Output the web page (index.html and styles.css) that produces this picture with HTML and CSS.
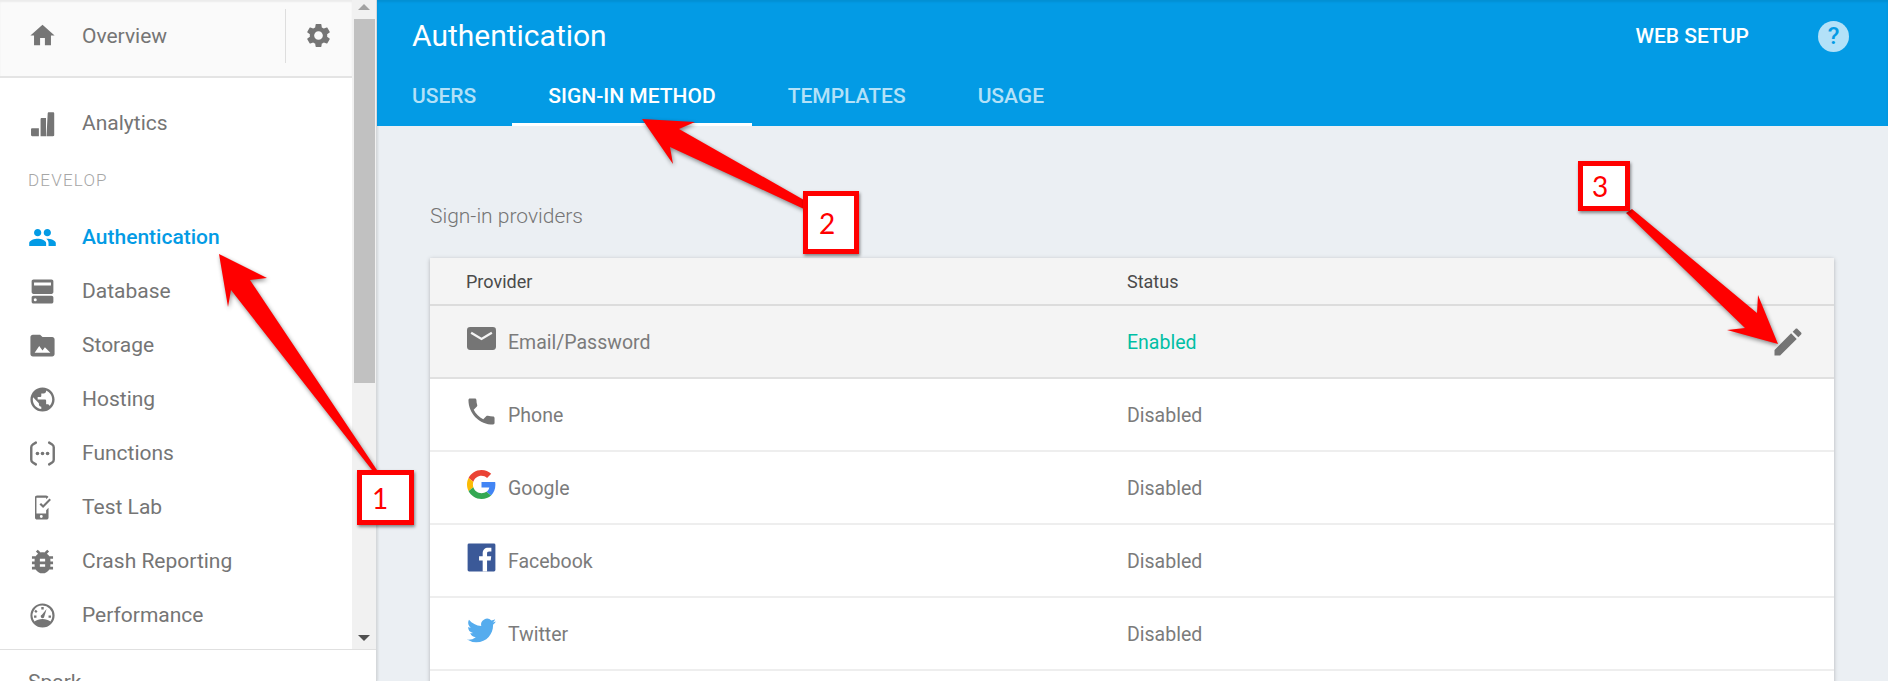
FILE: index.html
```html
<!DOCTYPE html>
<html lang="en">
<head>
    <meta charset="UTF-8">
    <title>Authentication</title>
    <link rel="stylesheet" href="styles.css">
</head>
<body>
<div class="page">
    <aside class="sidebar">
        <div class="sidebar-top">
            <div class="sidebar-scroll">
                <div class="overview">
                    <a class="nav-item overview-link">
                        <svg class="nav-icon" viewBox="0 0 24 24"><path d="M10 20v-6h4v6h5v-8h3L12 3 2 12h3v8z"/></svg>
                        Overview
                    </a>
                    <span class="overview-gear">
                        <svg viewBox="0 0 24 24"><path d="M19.14 12.94c.04-.3.06-.61.06-.94 0-.32-.02-.64-.07-.94l2.03-1.58c.18-.14.23-.41.12-.61l-1.92-3.32c-.12-.22-.37-.29-.59-.22l-2.39.96c-.5-.38-1.03-.7-1.62-.94l-.36-2.54c-.04-.24-.24-.41-.48-.41h-3.84c-.24 0-.43.17-.47.41l-.36 2.54c-.59.24-1.13.57-1.62.94l-2.39-.96c-.22-.08-.47 0-.59.22L2.74 8.87c-.12.21-.08.47.12.61l2.03 1.58c-.05.3-.09.63-.09.94s.02.64.07.94l-2.03 1.58c-.18.14-.23.41-.12.61l1.92 3.32c.12.22.37.29.59.22l2.39-.96c.5.38 1.03.7 1.62.94l.36 2.54c.05.24.24.41.48.41h3.84c.24 0 .44-.17.47-.41l.36-2.54c.59-.24 1.13-.56 1.62-.94l2.39.96c.22.08.47 0 .59-.22l1.92-3.32c.12-.22.07-.47-.12-.61l-2.01-1.58zM12 15.6c-1.98 0-3.6-1.62-3.6-3.6s1.62-3.6 3.6-3.6 3.6 1.62 3.6 3.6-1.62 3.6-3.6 3.6z"/></svg>
                    </span>
                </div>
                <nav class="nav">
                    <a class="nav-item">
                        <svg class="nav-icon" viewBox="0 0 24 24"><path d="M2.500 17c0-.6.4-1 1-1H9v6.500H3.500c-.6 0-1-.4-1-1zM10.400 8.500c0-.6.4-1 1-1h3.500v15h-4.500zM16.300 3.700c0-.6.4-1 1-1h3.400c.6 0 1 .4 1 1v17.800c0 .6-.4 1-1 1h-5.400z"/></svg>
                        Analytics
                    </a>
                    <div class="nav-heading">DEVELOP</div>
                    <a class="nav-item active">
                        <svg class="nav-icon" viewBox="0 0 24 24"><path d="M16 11c1.660 0 2.990-1.340 2.990-3S17.660 5 16 5c-1.660 0-3 1.340-3 3s1.340 3 3 3zm-8 0c1.660 0 2.990-1.340 2.990-3S9.660 5 8 5C6.340 5 5 6.340 5 8s1.340 3 3 3zm0 2c-2.330 0-7 1.170-7 3.500V19h14v-2.500c0-2.330-4.670-3.500-7-3.500zm8 0c-.29 0-.62.02-.97.05 1.160.84 1.970 1.970 1.970 3.450V19h6v-2.500c0-2.330-4.670-3.500-7-3.500z"/></svg>
                        Authentication
                    </a>
                    <a class="nav-item">
                        <svg class="nav-icon" viewBox="0 0 24 24"><path fill-rule="evenodd" d="M4.500 2h15c.8 0 1.500.7 1.500 1.500v9c0 .8-.7 1.500-1.500 1.500h-15c-.8 0-1.500-.7-1.500-1.500v-9C3 2.700 3.700 2 4.500 2zM5 4.500V7h14V4.500zM4.500 15.500h15c.8 0 1.500.7 1.500 1.500v3.500c0 .8-.7 1.500-1.500 1.500h-15c-.8 0-1.500-.7-1.500-1.500V17c0-.8.7-1.500 1.500-1.500zM6 17.500a1.200 1.200 0 1 0 0 2.500 1.200 1.200 0 0 0 0-2.500z"/></svg>
                        Database
                    </a>
                    <a class="nav-item">
                        <svg class="nav-icon" viewBox="0 0 24 24"><path fill-rule="evenodd" d="M10 3H4C2.900 3 2 3.900 2 5v14c0 1.100.9 2 2 2h16c1.100 0 2-.9 2-2V7c0-1.100-.9-2-2-2h-8zM5.500 18l3.800-5.500 2.700 3.600 2-2.600 4.500 4.500z"/></svg>
                        Storage
                    </a>
                    <a class="nav-item">
                        <svg class="nav-icon" viewBox="0 0 24 24"><path d="M12 2C6.480 2 2 6.480 2 12s4.480 10 10 10 10-4.480 10-10S17.520 2 12 2zm-1 17.930c-3.950-.49-7-3.850-7-7.930 0-.62.08-1.210.21-1.790L9 15v1c0 1.100.9 2 2 2v1.930zm6.900-2.540c-.26-.81-1-1.390-1.900-1.390h-1v-3c0-.55-.45-1-1-1H8v-2h2c.55 0 1-.45 1-1V7h2c1.100 0 2-.9 2-2v-.41c2.930 1.190 5 4.060 5 7.410 0 2.080-.8 3.970-2.100 5.390z"/></svg>
                        Hosting
                    </a>
                    <a class="nav-item">
                        <svg class="nav-icon" viewBox="0 0 24 24"><path fill="none" stroke="#757575" stroke-width="2" stroke-linecap="round" stroke-linejoin="round" d="M6.500 3 4 4.500c-.8.5-1.300 1.300-1.300 2.300v10.400c0 1 .5 1.800 1.300 2.300L6.500 21M17.500 3 20 4.500c.8.500 1.300 1.300 1.300 2.300v10.400c0 1-.5 1.800-1.300 2.300L17.500 21"/><circle cx="7.800" cy="12" r="1.500"/><circle cx="12" cy="12" r="1.500"/><circle cx="16.200" cy="12" r="1.500"/></svg>
                        Functions
                    </a>
                    <a class="nav-item">
                        <svg class="nav-icon" viewBox="0 0 24 24"><path d="M7.500 2H15c.9 0 1.700.6 1.900 1.400L15 5.200V4H7v13h8v-2.800l2-2V20.500c0 1-.8 1.500-1.700 1.500H7.500c-1 0-1.700-.6-1.700-1.500V3.500C5.800 2.600 6.500 2 7.500 2zm3.500 16.300a1.200 1.200 0 1 0 0 2.400 1.200 1.200 0 0 0 0-2.400z"/><path d="m9.500 9.500 1.300-1.300 1.700 1.700 5.300-5.400 1.200 1.300-6.500 6.600z"/></svg>
                        Test Lab
                    </a>
                    <a class="nav-item">
                        <svg class="nav-icon" viewBox="1 1 22 22"><path d="M20 8h-2.810c-.45-.78-1.070-1.450-1.820-1.960L17 4.410 15.590 3l-2.170 2.170C12.960 5.060 12.490 5 12 5c-.49 0-.96.06-1.410.17L8.410 3 7 4.410l1.620 1.630C7.880 6.550 7.260 7.220 6.810 8H4v2h2.090c-.05.33-.09.66-.09 1v1H4v2h2v1c0 .34.04.67.09 1H4v2h2.810c1.040 1.790 2.970 3 5.190 3s4.150-1.210 5.190-3H20v-2h-2.090c.05-.33.09-.66.09-1v-1h2v-2h-2v-1c0-.34-.04-.67-.09-1H20V8zm-6 8h-4v-2h4v2zm0-4h-4v-2h4v2z"/></svg>
                        Crash Reporting
                    </a>
                    <a class="nav-item">
                        <svg class="nav-icon" viewBox="0 0 24 24"><path fill-rule="evenodd" d="M12 2a10 10 0 1 0 0 20 10 10 0 0 0 0-20zm0 1.800a8.200 8.200 0 0 1 8.200 8.200c0 1.800-.6 3.500-1.600 4.900-1.700-1.300-4-2.100-6.600-2.100s-4.900.8-6.600 2.100A8.200 8.200 0 0 1 12 3.800zM11 5v2h2V5zM6.500 7.200 5.200 8.500l1.400 1.400 1.300-1.300zM5 12v1.800h2V12zm12 0v1.800h2V12zm-1.600-5.300-3.900 4.600a1.500 1.500 0 1 0 2 1.500z"/></svg>
                        Performance
                    </a>
                </nav>
            </div>
            <div class="scrollbar">
                <span class="scroll-up"></span>
                <span class="scroll-thumb"></span>
                <span class="scroll-down"></span>
            </div>
        </div>
        <div class="sidebar-footer">Spark</div>
    </aside>

    <main class="main">
        <header class="header">
            <div class="header-top">
                <h1 class="title">Authentication</h1>
                <a class="web-setup">WEB SETUP</a>
                <span class="help">?</span>
            </div>
            <div class="tabs">
                <a class="tab">USERS</a>
                <a class="tab tab-active">SIGN-IN METHOD</a>
                <a class="tab">TEMPLATES</a>
                <a class="tab">USAGE</a>
            </div>
        </header>
        <section class="content">
            <h2 class="section-title">Sign-in providers</h2>
            <div class="card">
                <div class="row row-head">
                    <div class="col-provider">Provider</div>
                    <div class="col-status">Status</div>
                </div>
                <div class="row row-selected">
                    <div class="col-provider">
                        <svg class="provider-icon" viewBox="0 0 28 24"><rect y="1" width="28" height="22" rx="3" fill="#757575"/><path d="m4 6.500 10 6 10-6" fill="none" stroke="#f4f4f4" stroke-width="2.200"/></svg>
                        Email/Password
                    </div>
                    <div class="col-status enabled">Enabled</div>
                    <svg class="edit-icon" viewBox="0 0 24 24"><path d="M3 17.250V21h3.750L17.810 9.940l-3.750-3.750L3 17.250zM20.710 7.040c.39-.39.39-1.020 0-1.410l-2.340-2.340c-.39-.39-1.020-.39-1.410 0l-1.830 1.830 3.750 3.750 1.830-1.830z"/></svg>
                </div>
                <div class="row">
                    <div class="col-provider">
                        <svg class="provider-icon" viewBox="2 2 20 20"><path fill="#757575" d="M6.620 10.790c1.440 2.830 3.760 5.140 6.590 6.590l2.200-2.200c.27-.27.67-.36 1.020-.24 1.120.37 2.330.57 3.570.57.55 0 1 .45 1 1V20c0 .55-.45 1-1 1-9.390 0-17-7.610-17-17 0-.55.45-1 1-1h3.500c.55 0 1 .45 1 1 0 1.250.2 2.450.57 3.570.11.35.03.74-.25 1.020l-2.200 2.200z"/></svg>
                        Phone
                    </div>
                    <div class="col-status">Disabled</div>
                </div>
                <div class="row">
                    <div class="col-provider">
                        <svg class="provider-icon" viewBox="0 0 48 48"><path fill="#EA4335" d="M24 9.500c3.540 0 6.710 1.220 9.210 3.600l6.850-6.850C35.900 2.380 30.470 0 24 0 14.620 0 6.510 5.380 2.560 13.220l7.980 6.190C12.430 13.720 17.740 9.500 24 9.500z"/><path fill="#4285F4" d="M46.980 24.550c0-1.570-.15-3.090-.38-4.550H24v9.020h12.940c-.58 2.960-2.260 5.480-4.780 7.180l7.730 6c4.510-4.180 7.090-10.360 7.090-17.650z"/><path fill="#FBBC05" d="M10.530 28.590c-.48-1.450-.76-2.990-.76-4.590s.27-3.140.76-4.590l-7.980-6.190C.92 16.460 0 20.120 0 24c0 3.880.92 7.540 2.560 10.780l7.970-6.190z"/><path fill="#34A853" d="M24 48c6.480 0 11.930-2.130 15.890-5.810l-7.730-6c-2.150 1.450-4.920 2.300-8.160 2.300-6.260 0-11.570-4.220-13.470-9.910l-7.980 6.190C6.510 42.620 14.620 48 24 48z"/></svg>
                        Google
                    </div>
                    <div class="col-status">Disabled</div>
                </div>
                <div class="row">
                    <div class="col-provider">
                        <svg class="provider-icon" viewBox="0 0 24 24"><rect x=".5" y=".5" width="23" height="23" rx="1.200" fill="#3b5998"/><path fill="#fff" d="M16.600 23.500v-9h3l.45-3.500H16.600V8.800c0-1 .28-1.700 1.730-1.700h1.850V4c-.32-.04-1.420-.14-2.700-.14-2.670 0-4.500 1.630-4.500 4.630V11h-3v3.500h3v9z"/></svg>
                        Facebook
                    </div>
                    <div class="col-status">Disabled</div>
                </div>
                <div class="row">
                    <div class="col-provider">
                        <svg class="provider-icon" viewBox="0 0 24 24"><path fill="#55acee" d="M23.950 4.570a10 10 0 0 1-2.820.78 4.960 4.960 0 0 0 2.160-2.730c-.95.560-2 .96-3.130 1.190a4.920 4.920 0 0 0-8.380 4.480C7.690 8.100 4.070 6.130 1.640 3.160a4.820 4.820 0 0 0-.67 2.480c0 1.710.87 3.210 2.190 4.100a4.900 4.900 0 0 1-2.230-.62v.06a4.920 4.920 0 0 0 3.950 4.830 5 5 0 0 1-2.210.08 4.940 4.940 0 0 0 4.600 3.420 9.870 9.870 0 0 1-6.100 2.100c-.39 0-.78-.02-1.170-.06a14 14 0 0 0 7.560 2.210c9.050 0 14-7.500 14-13.990 0-.21 0-.42-.02-.63a9.940 9.940 0 0 0 2.410-2.570z"/></svg>
                        Twitter
                    </div>
                    <div class="col-status">Disabled</div>
                </div>
                <div class="row"></div>
            </div>
        </section>
    </main>

    <!-- red callouts drawn over the screenshot -->
    <svg class="arrows" viewBox="0 0 1888 681">
        <polygon points="219,254 267,278 250,280 377,470 372,470 231,290 228,307"/>
        <polygon points="642,119 695,122 679,129 804,200 804,209 670,147 673,164"/>
        <polygon points="1778,344 1758,295 1757,313 1632,209 1626,213 1745,328 1727,330"/>
    </svg>
    <div class="callout callout-1">1</div>
    <div class="callout callout-2">2</div>
    <div class="callout callout-3">3</div>
</div>
</body>
</html>
```

FILE: styles.css
```css
* {
    box-sizing: border-box;
}

html, body {
    margin: 0;
    padding: 0;
    height: 100%;
    overflow: hidden;
}

body {
    font-family: Roboto, "Liberation Sans", sans-serif;
    background-color: #ebeff3;
    color: #757575;
}

.page {
    position: relative;
    display: flex;
    width: 1888px;
    height: 681px;
    overflow: hidden;
}

/* sidebar */
.sidebar {
    width: 377px;
    flex-shrink: 0;
    display: flex;
    flex-direction: column;
    background-color: #fff;
    border-right: 1px solid #d5d8db;
    box-shadow: 1px 0 2px rgba(0, 0, 0, 0.1);
}

.sidebar-top {
    display: flex;
    flex-shrink: 0;
    height: 650px;
    border-bottom: 1px solid #e0e0e0;
}

.sidebar-scroll {
    flex: 1;
}

.overview {
    display: flex;
    align-items: center;
    height: 78px;
    padding-bottom: 5px;
    background-color: #fafafa;
    border-bottom: 2px solid #e4e4e4;
    box-shadow: inset 0 2px 2px rgba(0, 0, 0, 0.06);
}

.overview-link {
    width: 285px;
    height: 54px;
}

.overview-gear {
    display: flex;
    align-items: center;
    justify-content: center;
    width: 67px;
    height: 54px;
    border-left: 1px solid #dedede;
    padding-right: 1px;
}

.overview-gear svg {
    width: 29px;
    height: 29px;
    fill: #757575;
}

.nav {
    padding-top: 18px;
}

.nav-item {
    display: flex;
    align-items: center;
    height: 54px;
    padding-left: 28px;
    font-size: 21px;
    color: #757575;
}

.nav-icon {
    width: 29px;
    height: 29px;
    margin-right: 25px;
    fill: #757575;
    flex-shrink: 0;
}

.nav-heading {
    height: 60px;
    padding: 20px 0 0 28px;
    font-size: 17px;
    letter-spacing: 1.2px;
    color: #a6a6a6;
    font-weight: 300;
}

.nav-item.active {
    color: #039be5;
    font-weight: 500;
}

.nav-item.active .nav-icon {
    fill: #039be5;
}

.scrollbar {
    position: relative;
    display: flex;
    flex-direction: column;
    align-items: center;
    width: 24px;
    background-color: #f1f1f1;
    padding-top: 19px;
}

.scroll-thumb {
    width: 21px;
    height: 364px;
    background-color: #c1c1c1;
}

.scroll-up,
.scroll-down {
    position: absolute;
    left: 6px;
    border-left: 6px solid transparent;
    border-right: 6px solid transparent;
}

.scroll-up {
    top: 4px;
    border-bottom: 6px solid #a3a3a3;
}

.scroll-down {
    bottom: 8px;
    border-top: 6px solid #505050;
}

.sidebar-footer {
    padding: 20px 0 0 28px;
    font-size: 21px;
}

/* main */
.main {
    flex: 1;
    min-width: 0;
}

.header {
    height: 126px;
    background-color: #039be5;
    color: #fff;
    box-shadow: inset 0 2px 2px rgba(0, 0, 0, 0.08);
}

.header-top {
    display: flex;
    align-items: center;
    height: 72px;
    padding-left: 35px;
}

.title {
    flex: 1;
    margin: 0 0 2px;
    font-size: 30px;
    font-weight: 400;
}

.web-setup {
    font-size: 21px;
    font-weight: 500;
    margin: 0 69px 1px 0;
}

.help {
    display: flex;
    align-items: center;
    justify-content: center;
    width: 31px;
    height: 31px;
    margin-right: 39px;
    border-radius: 50%;
    background-color: #b3e1f8;
    color: #039be5;
    font-size: 24px;
    font-weight: 500;
}

.tabs {
    display: flex;
    height: 54px;
    margin-left: -1px;
}

.tab {
    display: flex;
    align-items: center;
    height: 54px;
    padding: 0 36px 6px;
    font-size: 21px;
    font-weight: 500;
    color: #b3e1f8;
}

.tab-active {
    color: #fff;
    border-bottom: 3px solid #fff;
    padding-bottom: 3px;
}

.content {
    padding-left: 53px;
}

.section-title {
    margin: 0;
    height: 132px;
    padding-top: 78px;
    font-size: 21px;
    font-weight: 300;
    color: #757575;
}

.card {
    width: 1404px;
    background-color: #fff;
    box-shadow: 0 1px 4px rgba(0, 0, 0, 0.25);
}

.row {
    position: relative;
    display: flex;
    align-items: center;
    height: 73px;
    padding-top: 2px;
    border-bottom: 2px solid #eeeeee;
    font-size: 19.500px;
    color: #7b7b7b;
}

.row-head {
    height: 48px;
    padding-top: 0;
    background-color: #f4f4f4;
    border-bottom-color: #dcdcdc;
    font-size: 18px;
    font-weight: 400;
    color: #4a4a4a;
}

.row-selected {
    background-color: #f4f4f4;
    border-bottom-color: #e0e0e0;
}

.col-provider {
    display: flex;
    align-items: center;
    width: 697px;
    padding-left: 36px;
}

.enabled {
    color: #00bfa5;
}

.provider-icon {
    width: 29px;
    height: 29px;
    margin: 0 12px 8px 1px;
    flex-shrink: 0;
}

.edit-icon {
    position: absolute;
    right: 28px;
    top: 18px;
    width: 36px;
    height: 36px;
    fill: #757575;
}

/* callouts */
.arrows {
    position: absolute;
    left: 0;
    top: 0;
    width: 1888px;
    height: 681px;
    fill: #ff0000;
    filter: drop-shadow(1px 2px 2px rgba(0, 0, 0, 0.45));
}

.callout {
    position: absolute;
    display: flex;
    align-items: center;
    justify-content: center;
    padding-right: 8px;
    border: 5px solid #ff0000;
    background-color: #fff;
    color: #ff0000;
    font-family: Lato, sans-serif;
    font-size: 28px;
    box-shadow: 1px 2px 3px rgba(0, 0, 0, 0.45);
}

.callout-1 {
    left: 357px;
    top: 470px;
    width: 57px;
    height: 55px;
    padding-right: 11px;
}

.callout-2 {
    left: 803px;
    top: 191px;
    width: 56px;
    height: 63px;
}

.callout-3 {
    left: 1578px;
    top: 161px;
    width: 52px;
    height: 50px;
}
```
